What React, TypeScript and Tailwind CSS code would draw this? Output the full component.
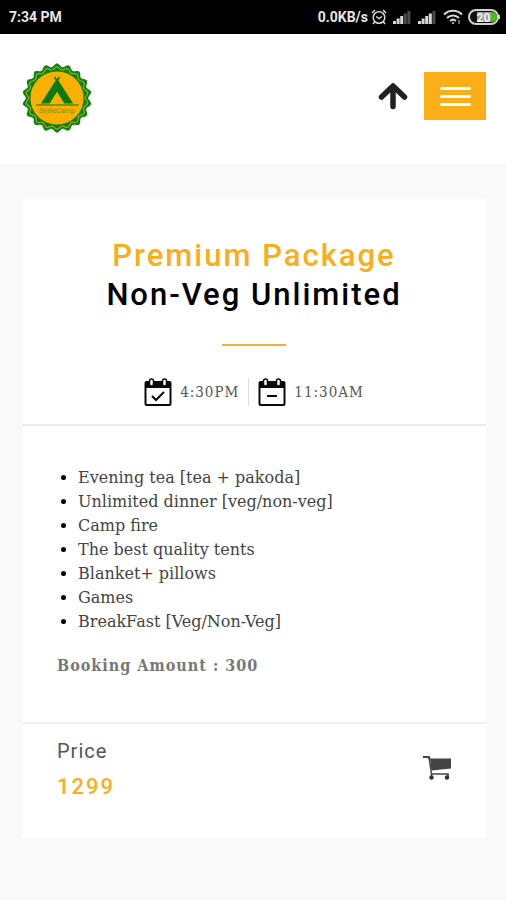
const FEATURES = [
  "Evening tea [tea + pakoda]",
  "Unlimited dinner [veg/non-veg]",
  "Camp fire",
  "The best quality tents",
  "Blanket+ pillows",
  "Games",
  "BreakFast [Veg/Non-Veg]",
];

// Wavy outline of the round badge
function scallop(radius: number, depth: number, waves: number) {
  const points: string[] = [];
  for (let i = 0; i < 360; i += 2) {
    const a = (i * Math.PI) / 180;
    const r = radius + depth * Math.cos(a * waves);
    points.push(`${(50 + r * Math.sin(a)).toFixed(2)},${(50 - r * Math.cos(a)).toFixed(2)}`);
  }
  return points.join(" ");
}

function Logo() {
  return (
    <svg viewBox="0 0 100 100" className="size-[70px]" role="img" aria-label="Camp">
      <polygon points={scallop(47, 2.5, 18)} fill="#0b8414" />
      <polygon points={scallop(42.5, 2, 18)} fill="none" stroke="#b5ab1c" strokeWidth="1.5" />
      <circle cx="50" cy="50" r="38" fill="#f9b000" />
      <path d="M46.500 19l3.500 4 3.500-4 1 1-2.500 5L73 58H60.500L50 41 39.500 58H27l21-33-2.500-5z" fill="#0b7a10" />
      <path d="M20 60h61" stroke="#4d8c10" strokeWidth="2" />
      <text x="50" y="71" textAnchor="middle" fontSize="10" fill="#8a8a08" fontFamily="Roboto, sans-serif">
        SmileCamp
      </text>
    </svg>
  );
}

function Signal({ level }: { level: number }) {
  return (
    <svg viewBox="0 0 18 13" className="h-[13px] w-[18px]" aria-hidden="true">
      {[0, 1, 2, 3, 4].map((i) => (
        <rect
          key={i}
          x={i * 3.6}
          y={10 - i * 2.5}
          width="3"
          height={3 + i * 2.5}
          fill={i < level ? "#d8d8d8" : "#4a4a4a"}
        />
      ))}
    </svg>
  );
}

function StatusBar() {
  return (
    <div className="flex h-[34px] items-center justify-between bg-black pr-[6px] pl-[9px] text-[14px] font-bold text-[#e6e6e6]">
      <span>7:34 PM</span>
      <div className="flex items-center">
        <span>0.0KB/s</span>
        <svg viewBox="0 0 16 16" className="ml-[3px] size-4" fill="none" stroke="#d8d8d8" strokeWidth="1.500" aria-hidden="true">
          <circle cx="8" cy="8.500" r="5.800" />
          <path d="M1 4l3-3M15 4l-3-3M5 7.500l3 2 3-2M3.500 13l-1.500 2M12.500 13l1.500 2" />
        </svg>
        <span className="ml-[6px] flex gap-[7px]">
          <Signal level={3} />
          <Signal level={4} />
        </span>
        <svg viewBox="0 0 20 16" className="ml-[7px] h-4 w-5" fill="none" stroke="#d8d8d8" strokeWidth="2" aria-hidden="true">
          <path d="M1 5.500c5-5 13-5 18 0M4 9c3.500-3.500 8.500-3.500 12 0M7 12c2-1.800 4-1.800 6 0" />
          <circle cx="10" cy="14" r="1" fill="#d8d8d8" stroke="none" />
          <path d="M16 11v4" strokeWidth="1" />
        </svg>
        <svg viewBox="0 0 32 16" className="ml-[5px] h-4 w-8" role="img" aria-label="Battery 20">
          <rect x="1" y="1" width="29" height="14" rx="7" fill="#111" stroke="#d0d0d0" strokeWidth="2" />
          <path d="M9 3h14v10H9z" fill="#9b9b9b" />
          <path d="M23 3h1a5 5 0 0 1 0 10h-1z" fill="#3fc50a" />
          <path d="M31 6v4" stroke="#d0d0d0" strokeWidth="2" />
          <text x="15.500" y="12.500" textAnchor="middle" fontSize="12" fontWeight="700" fill="#f0f0f0">
            20
          </text>
        </svg>
      </div>
    </div>
  );
}

function Header() {
  return (
    <header className="flex h-[130px] items-center justify-between bg-white pr-5 pb-[2px] pl-[22px]">
      <a href="#home">
        <Logo />
      </a>
      <div className="mb-1 flex items-center gap-4">
        <a href="#top" aria-label="Back to top">
          <svg viewBox="0 0 30 30" className="size-[30px]" fill="none" stroke="#202022" strokeWidth="5.500" strokeLinecap="round" strokeLinejoin="round">
            <path d="M3.500 16L15 5l11.500 11M15 7v18.500" />
          </svg>
        </a>
        <button type="button" aria-label="Menu" className="flex h-12 w-[62px] flex-col items-center justify-center gap-[5px] bg-[#fbae17]">
          <span className="h-[3px] w-[31px] rounded-full bg-white" />
          <span className="h-[3px] w-[31px] rounded-full bg-white" />
          <span className="h-[3px] w-[31px] rounded-full bg-white" />
        </button>
      </div>
    </header>
  );
}

function CalendarIcon({ mark }: { mark: string }) {
  return (
    <svg viewBox="0 0 28 30" className="h-[30px] w-7" fill="none" stroke="#0a0a0a" aria-hidden="true">
      <rect x="1.500" y="5" width="25" height="23" rx="1" strokeWidth="2" />
      <path d="M1 5h26v6H1z" fill="#0a0a0a" stroke="none" />
      <rect x="5.500" y="2" width="4" height="7" rx="2" fill="#fff" strokeWidth="1.500" />
      <rect x="18.500" y="2" width="4" height="7" rx="2" fill="#fff" strokeWidth="1.500" />
      <path d={mark} strokeWidth="2" />
    </svg>
  );
}

function Schedule() {
  return (
    <div className="flex items-center justify-center font-['DejaVu_Serif_Condensed','DejaVu_Serif',serif] text-[15px] tracking-[1px] text-[#555]">
      <CalendarIcon mark="M8 19l4 4 8-8" />
      <span className="ml-2">4:30PM</span>
      <span className="mx-[9px] h-7 w-px bg-[#ddd]" />
      <CalendarIcon mark="M9 19h10" />
      <span className="ml-2">11:30AM</span>
    </div>
  );
}

function PackageCard() {
  return (
    <article className="bg-white">
      <div className="border-b-2 border-[#ebebeb] pt-[37px] pb-[17px]">
        <h1 className="text-center text-[31px] leading-[39px] font-medium tracking-[2px] text-black">
          <span className="block text-[#fbae17]">Premium Package</span>
          Non-Veg Unlimited
        </h1>
        <div className="mx-auto mt-[30px] mb-[31px] h-[2px] w-16 bg-[#f3b13c]" />
        <Schedule />
      </div>
      <div className="border-b-2 border-[#f1f1f1] px-[35px] pt-10 pb-[44px]">
        <ul className="list-disc pl-[21px] font-['DejaVu_Serif',serif] text-[16px] leading-6 text-[#444] marker:text-black">
          {FEATURES.map((feature) => (
            <li key={feature}>{feature}</li>
          ))}
        </ul>
        <p className="mt-5 font-['DejaVu_Serif_Condensed','DejaVu_Serif',serif] text-[16px] leading-6 font-bold tracking-[1px] text-[#777]">
          Booking Amount : 300
        </p>
      </div>
      <div className="flex items-start justify-between px-[35px] pt-[15px] pb-[35px]">
        <div>
          <p className="text-[20px] leading-6 tracking-[1px] text-[#555]">Price</p>
          <p className="mt-2 text-[22px] leading-8 font-medium tracking-[2px] text-[#fbae17]">1299</p>
        </div>
        <button type="button" aria-label="Add to cart" className="mt-[16px]">
          <svg viewBox="0 0 28 26" className="h-[26px] w-7" fill="none" stroke="#444" strokeWidth="1.500">
            <path d="M0 2h6l2.500 17H25v3M8.500 19v3" />
            <path d="M0 1h6.500l1 3H5.500L5 3H0z" fill="#444" stroke="none" />
            <path d="M7 3.500h21v10L8.500 15.500z" fill="#444" stroke="none" />
            <circle cx="8.500" cy="22.500" r="2.200" fill="#333" stroke="none" />
            <circle cx="24" cy="22.500" r="2.200" fill="#333" stroke="none" />
          </svg>
        </button>
      </div>
    </article>
  );
}

export default function App() {
  return (
    <div className="min-h-screen bg-[#f9f9f9] font-[Roboto,sans-serif]">
      <StatusBar />
      <Header />
      <main className="pt-[35px] pr-5 pb-[62px] pl-[22px]">
        <PackageCard />
      </main>
    </div>
  );
}
